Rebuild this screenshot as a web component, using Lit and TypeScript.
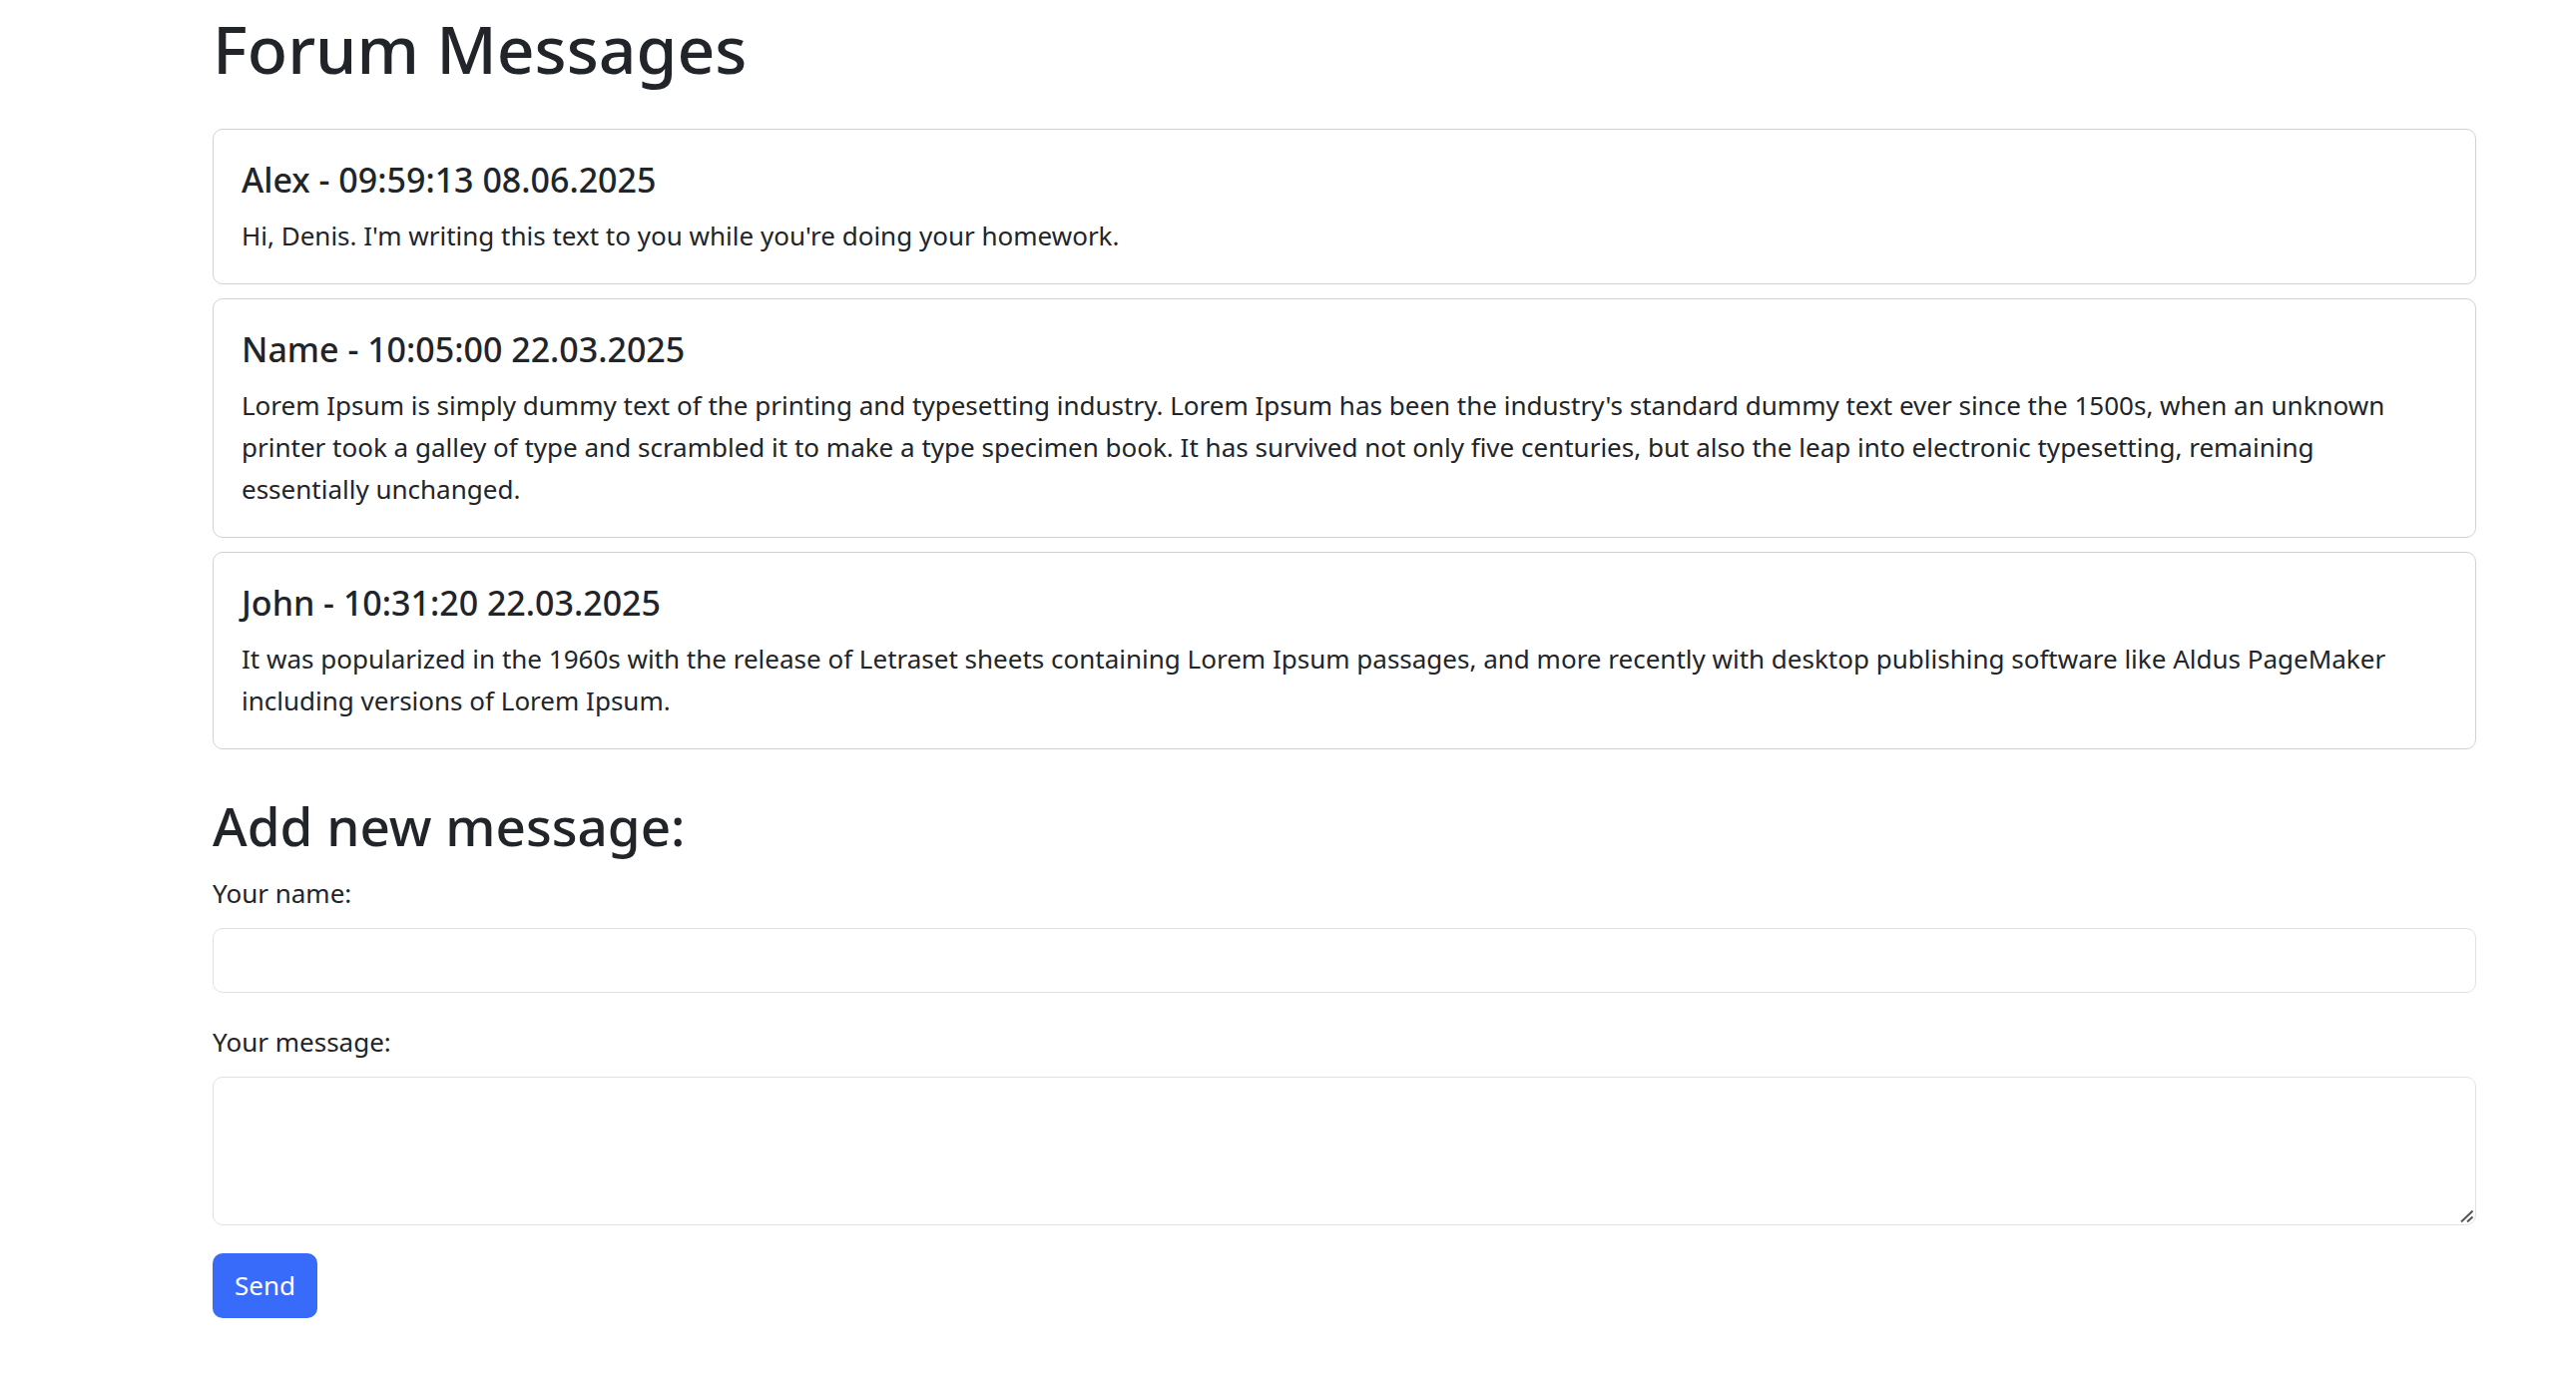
import { LitElement, html, css } from "lit";
import { customElement, state } from "lit/decorators.js";

interface Message {
  author: string;
  time: string;
  text: string;
}

@customElement("app-root")
export class AppRoot extends LitElement {
  static styles = css`
    :host {
      display: block;
      font-family: "Noto Sans", "Open Sans", sans-serif;
      font-size: 26px;
      line-height: 42px;
      color: #212529;
      background: #fff;
    }
    * {
      box-sizing: border-box;
    }
    .page {
      padding: 6px 100px 56px 213px;
    }
    h1,
    h2,
    h5,
    p {
      margin: 0;
      font-weight: 500;
    }
    h1 {
      font-size: 66px;
      line-height: 84px;
      margin-bottom: 39px;
    }
    h2 {
      font-size: 53px;
      line-height: 68px;
      margin: 43px 0 12px;
    }
    .list {
      display: grid;
      gap: 14px;
    }
    .card {
      border: 1px solid #d2d2d2;
      border-radius: 10px;
      padding: 29px 28px 27px;
    }
    .title {
      font-size: 34px;
      line-height: 42px;
      margin-bottom: 14px;
    }
    .text {
      font-weight: 400;
    }
    label {
      display: block;
      margin-bottom: 14px;
    }
    .control {
      display: block;
      width: 100%;
      height: 65px;
      padding: 10px 20px;
      border: 1px solid #dee2e6;
      border-radius: 10px;
      font: inherit;
      color: inherit;
      background: #fff;
      margin-bottom: 28px;
    }
    .area {
      height: 149px;
      resize: none;
    }
    .field {
      position: relative;
    }
    .grip {
      position: absolute;
      right: 2px;
      bottom: 2px;
      width: 14px;
      height: 14px;
      fill: none;
      stroke: #555;
      stroke-width: 2;
      pointer-events: none;
    }
    .send {
      display: block;
      font: inherit;
      line-height: 41px;
      color: #fff;
      background: #386bf9;
      border: 0;
      border-radius: 10px;
      padding: 12px 22px;
    }
  `;

  @state() private messages: Message[] = [
    {
      author: "Alex",
      time: "09:59:13 08.06.2025",
      text: "Hi, Denis. I'm writing this text to you while you're doing your homework.",
    },
    {
      author: "Name",
      time: "10:05:00 22.03.2025",
      text: "Lorem Ipsum is simply dummy text of the printing and typesetting industry. Lorem Ipsum has been the industry's standard dummy text ever since the 1500s, when an unknown printer took a galley of type and scrambled it to make a type specimen book. It has survived not only five centuries, but also the leap into electronic typesetting, remaining essentially unchanged.",
    },
    {
      author: "John",
      time: "10:31:20 22.03.2025",
      text: "It was popularized in the 1960s with the release of Letraset sheets containing Lorem Ipsum passages, and more recently with desktop publishing software like Aldus PageMaker including versions of Lorem Ipsum.",
    },
  ];

  render() {
    return html`
      <main class="page">
        <h1>Forum Messages</h1>
        <div class="list">
          ${this.messages.map(
            (m) => html`
              <article class="card">
                <h5 class="title">${m.author} - ${m.time}</h5>
                <p class="text">${m.text}</p>
              </article>
            `
          )}
        </div>
        <h2>Add new message:</h2>
        <form @submit=${(e: Event) => e.preventDefault()}>
          <label for="name">Your name:</label>
          <input class="control" id="name" type="text" />
          <label for="message">Your message:</label>
          <div class="field">
            <textarea class="control area" id="message"></textarea>
            <svg class="grip" viewBox="0 0 14 14" aria-hidden="true">
              <path d="M1 12.5 12.5 1.5M7 12.5 12.5 7.5" />
            </svg>
          </div>
          <button class="send" type="submit">Send</button>
        </form>
      </main>
    `;
  }
}
